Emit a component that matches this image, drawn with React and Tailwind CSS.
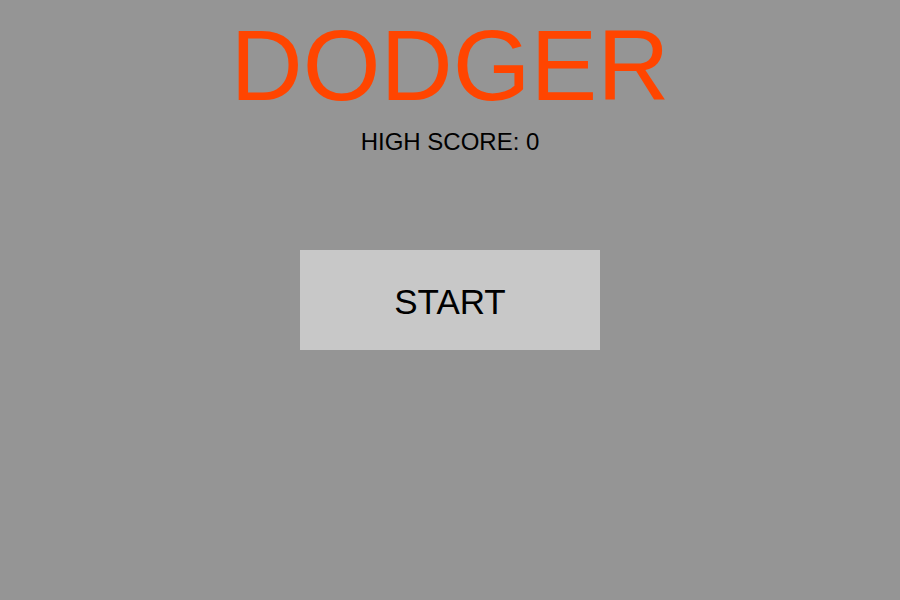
export default function App() {
  return (
    <div className="flex h-[600px] w-[900px] flex-col items-center bg-[#959595] font-['Liberation_Sans',Arial,sans-serif]">
      <h1 className="mt-[15px] text-[100px] leading-[100px] text-[#ff4500]">DODGER</h1>
      <p className="mt-[15px] text-[24px] leading-[24px] text-black">HIGH SCORE: 0</p>
      <button className="mt-[96px] flex h-[100px] w-[300px] items-center justify-center bg-[#c8c8c8] pt-[3px] text-[35px] leading-none text-black">
        START
      </button>
    </div>
  );
}
